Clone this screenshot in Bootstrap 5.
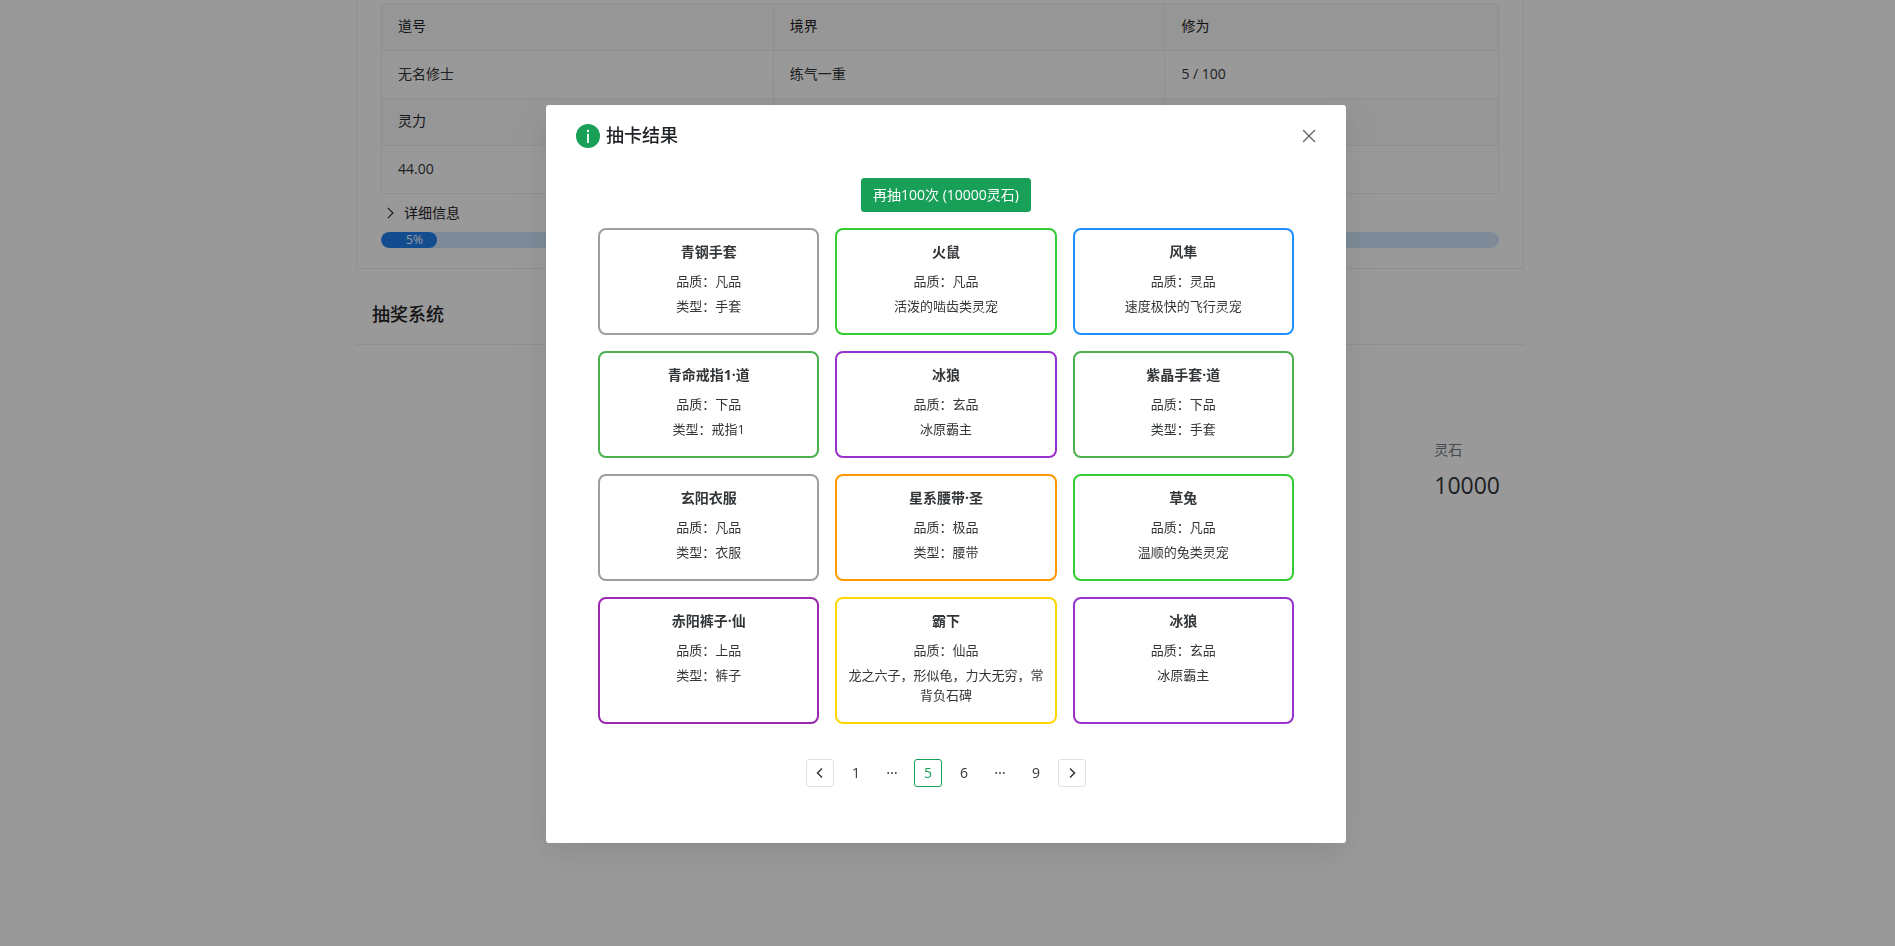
<!DOCTYPE html>
<html lang="zh-CN">
<head>
<meta charset="utf-8">
<meta name="viewport" content="width=device-width, initial-scale=1">
<title>抽奖系统</title>
<link href="https://cdn.jsdelivr.net/npm/bootstrap@5.3.0/dist/css/bootstrap.min.css" rel="stylesheet">
<style>
  body { font-family: "Open Sans", "Noto Sans CJK SC", sans-serif; font-size: 14px; line-height: 22px; color: #333639; padding-right: 15px; }
  .page { max-width: 1168px; }
  .player { border: 1px solid #efeff5; border-top: 0; border-radius: 0 0 3px 3px; padding: 3px 24px 20px; }
  .stats { border: 1px solid #efeff5; border-radius: 3px; border-collapse: separate; border-spacing: 0; width: 100%; table-layout: fixed; }
  .stats th, .stats td { padding: 11px 16px 13px; border-bottom: 1px solid #efeff5; border-right: 1px solid #efeff5; }
  .stats th { background: #fafafc; color: #1f2225; font-weight: 400; line-height: 22px; }
  .stats td { line-height: 23px; }
  .stats tr > :last-child { border-right: 0; }
  .stats tr:last-child > td { border-bottom: 0; }
  .stats .wide { width: 35.1%; }
  .detail-toggle { padding: 0 6px; margin: 8px 0; gap: 9px; color: #1f2225; font-size: 14px; line-height: 22px; border: 0; background: none; }
  .exp { height: 16px; border-radius: 8px; background: #d2e6fc; font-size: 12px; }
  .exp .progress-bar { border-radius: 8px; background: #2080f0; padding-right: 14px; text-align: right; line-height: 16px; }
  .section-head { font-size: 18px; font-weight: 500; line-height: 28px; color: #1f2225; margin: 31px 0 0; padding: 0 16px 16px; border-bottom: 1px solid #efeff5; }
  .wallet { padding: 94px 24px 0; }
  .wallet dt { font-weight: 400; color: #767c82; margin-bottom: 8px; }
  .wallet dd { font-size: 23px; line-height: 32px; margin: 0; }

  .modal { padding: 2px 3px 0 0; }
  .modal-backdrop { --bs-backdrop-opacity: .4; }
  .modal-dialog { --bs-modal-width: 800px; }
  .modal-content { border: 0; border-radius: 3px; color: #333639;
    box-shadow: 0 6px 16px -9px rgba(0,0,0,.08), 0 9px 28px 0 rgba(0,0,0,.05), 0 12px 48px 16px rgba(0,0,0,.03); }
  .modal-header { padding: 17px 28px 0; border: 0; }
  .modal-title { font-size: 18px; font-weight: 500; line-height: 26px; padding-bottom: 2px; color: #1f2225; }
  .modal-body { padding: 28px 28px 56px; }
  .close-x { color: #666; width: 18px; height: 18px; background: none; }
  .again { --bs-btn-color: #fff; --bs-btn-bg: #18a058; --bs-btn-border-color: #18a058; --bs-btn-hover-color: #fff; --bs-btn-hover-bg: #36ad6a; --bs-btn-hover-border-color: #36ad6a;
    font-size: 14px; line-height: 22px; border-radius: 3px; padding: 5px 11px; }
  .results { display: grid; grid-template-columns: repeat(3, 1fr); gap: 16px; padding: 0 24px; margin: 16px 0 35px; }
  .item { border: 2px solid #9e9e9e; border-radius: 8px; padding: 11px 10px 17px; display: flex; flex-direction: column; gap: 5px; text-align: center; }
  .item h3 { font-size: 14px; font-weight: 700; line-height: 22px; margin: 0 0 3px; }
  .item p { font-size: 13px; line-height: 20px; margin: 0; }
  .c-green { border-color: #32cd32; } .c-blue { border-color: #1e90ff; } .c-low { border-color: #4caf50; }
  .c-violet { border-color: #9932cc; } .c-orange { border-color: #ff9800; } .c-purple { border-color: #9c27b0; } .c-gold { border-color: #ffd700; }
  .pager { gap: 8px; margin: 0; }
  .pager .page-item .page-link { width: 28px; height: 28px; padding: 0; border: 1px solid transparent; border-radius: 3px; background: none; color: #333639; font-size: 14px; line-height: 26px; display: flex; align-items: center; justify-content: center; margin: 0; }
  .pager .page-item .step { border-color: #e0e0e6; }
  .pager .page-item.active .page-link { border-color: #18a058; color: #18a058; }
</style>
</head>
<body>
<main class="page mx-auto">
  <section class="player">
    <table class="stats">
      <colgroup><col class="wide"><col class="wide"><col></colgroup>
      <tbody>
        <tr><th scope="col">道号</th><th scope="col">境界</th><th scope="col">修为</th></tr>
        <tr><td>无名修士</td><td>练气一重</td><td>5 / 100</td></tr>
        <tr><th scope="col">灵力</th><th></th><th></th></tr>
        <tr><td>44.00</td><td></td><td></td></tr>
      </tbody>
    </table>
    <button type="button" class="detail-toggle d-flex align-items-center">
      <svg width="8" height="12" viewBox="0 0 8 12" fill="none" stroke="currentColor" stroke-width="1.1"><path d="M0.8 0.8L6 6L0.8 11.2"/></svg>
      <span>详细信息</span>
    </button>
    <div class="progress exp" role="progressbar" aria-label="修为" aria-valuenow="5" aria-valuemin="0" aria-valuemax="100">
      <div class="progress-bar" style="width:5%">5%</div>
    </div>
  </section>
  <section>
    <h2 class="section-head">抽奖系统</h2>
    <div class="wallet d-flex justify-content-end">
      <dl class="m-0"><dt>灵石</dt><dd>10000</dd></dl>
    </div>
  </section>
</main>

<div class="modal d-block show" tabindex="-1" role="dialog" aria-modal="true" aria-labelledby="resultTitle">
  <div class="modal-dialog modal-dialog-centered">
    <div class="modal-content">
      <div class="modal-header d-flex align-items-center justify-content-between">
        <div class="d-flex align-items-center gap-1">
          <svg width="28" height="28" viewBox="0 0 28 28"><circle cx="14" cy="14" r="12" fill="#18a058"/><circle cx="14" cy="9" r="1.2" fill="#fff"/><path d="M14 12.4V20.2" stroke="#fff" stroke-width="1.8" stroke-linecap="round"/></svg>
          <h1 class="modal-title" id="resultTitle">抽卡结果</h1>
        </div>
        <button type="button" class="close-x border-0 p-0 d-flex align-items-center justify-content-center" aria-label="关闭">
          <svg width="14" height="14" viewBox="0 0 14 14" fill="none" stroke="currentColor" stroke-width="1.4" stroke-linecap="round"><path d="M1.5 1.5L12.5 12.5M12.5 1.5L1.5 12.5"/></svg>
        </button>
      </div>
      <div class="modal-body">
        <div class="text-center"><button type="button" class="btn again">再抽100次 (10000灵石)</button></div>
        <div class="results">
          <article class="item"><h3>青钢手套</h3><p>品质：凡品</p><p>类型：手套</p></article>
          <article class="item c-green"><h3>火鼠</h3><p>品质：凡品</p><p>活泼的啮齿类灵宠</p></article>
          <article class="item c-blue"><h3>风隼</h3><p>品质：灵品</p><p>速度极快的飞行灵宠</p></article>
          <article class="item c-low"><h3>青命戒指1·道</h3><p>品质：下品</p><p>类型：戒指1</p></article>
          <article class="item c-violet"><h3>冰狼</h3><p>品质：玄品</p><p>冰原霸主</p></article>
          <article class="item c-low"><h3>紫晶手套·道</h3><p>品质：下品</p><p>类型：手套</p></article>
          <article class="item"><h3>玄阳衣服</h3><p>品质：凡品</p><p>类型：衣服</p></article>
          <article class="item c-orange"><h3>星系腰带·圣</h3><p>品质：极品</p><p>类型：腰带</p></article>
          <article class="item c-green"><h3>草兔</h3><p>品质：凡品</p><p>温顺的兔类灵宠</p></article>
          <article class="item c-purple"><h3>赤阳裤子·仙</h3><p>品质：上品</p><p>类型：裤子</p></article>
          <article class="item c-gold"><h3>霸下</h3><p>品质：仙品</p><p>龙之六子，形似龟，力大无穷，常背负石碑</p></article>
          <article class="item c-violet"><h3>冰狼</h3><p>品质：玄品</p><p>冰原霸主</p></article>
        </div>
        <nav aria-label="分页">
          <ul class="pagination pager justify-content-center">
            <li class="page-item"><a class="page-link step" href="#" aria-label="上一页"><svg width="8" height="12" viewBox="0 0 8 12" fill="none" stroke="currentColor" stroke-width="1.5"><path d="M6 1.5L1.5 6L6 10.5"/></svg></a></li>
            <li class="page-item"><a class="page-link" href="#">1</a></li>
            <li class="page-item"><a class="page-link" href="#" aria-label="向前翻页"><svg width="10" height="4" viewBox="0 0 10 4" fill="currentColor"><circle cx="1.2" cy="2" r="0.9"/><circle cx="5" cy="2" r="0.9"/><circle cx="8.8" cy="2" r="0.9"/></svg></a></li>
            <li class="page-item active"><a class="page-link" href="#" aria-current="page">5</a></li>
            <li class="page-item"><a class="page-link" href="#">6</a></li>
            <li class="page-item"><a class="page-link" href="#" aria-label="向后翻页"><svg width="10" height="4" viewBox="0 0 10 4" fill="currentColor"><circle cx="1.2" cy="2" r="0.9"/><circle cx="5" cy="2" r="0.9"/><circle cx="8.8" cy="2" r="0.9"/></svg></a></li>
            <li class="page-item"><a class="page-link" href="#">9</a></li>
            <li class="page-item"><a class="page-link step" href="#" aria-label="下一页"><svg width="8" height="12" viewBox="0 0 8 12" fill="none" stroke="currentColor" stroke-width="1.5"><path d="M2 1.5L6.5 6L2 10.5"/></svg></a></li>
          </ul>
        </nav>
      </div>
    </div>
  </div>
</div>
<div class="modal-backdrop show"></div>
<script src="https://cdn.jsdelivr.net/npm/bootstrap@5.3.0/dist/js/bootstrap.bundle.min.js"></script>
</body>
</html>
